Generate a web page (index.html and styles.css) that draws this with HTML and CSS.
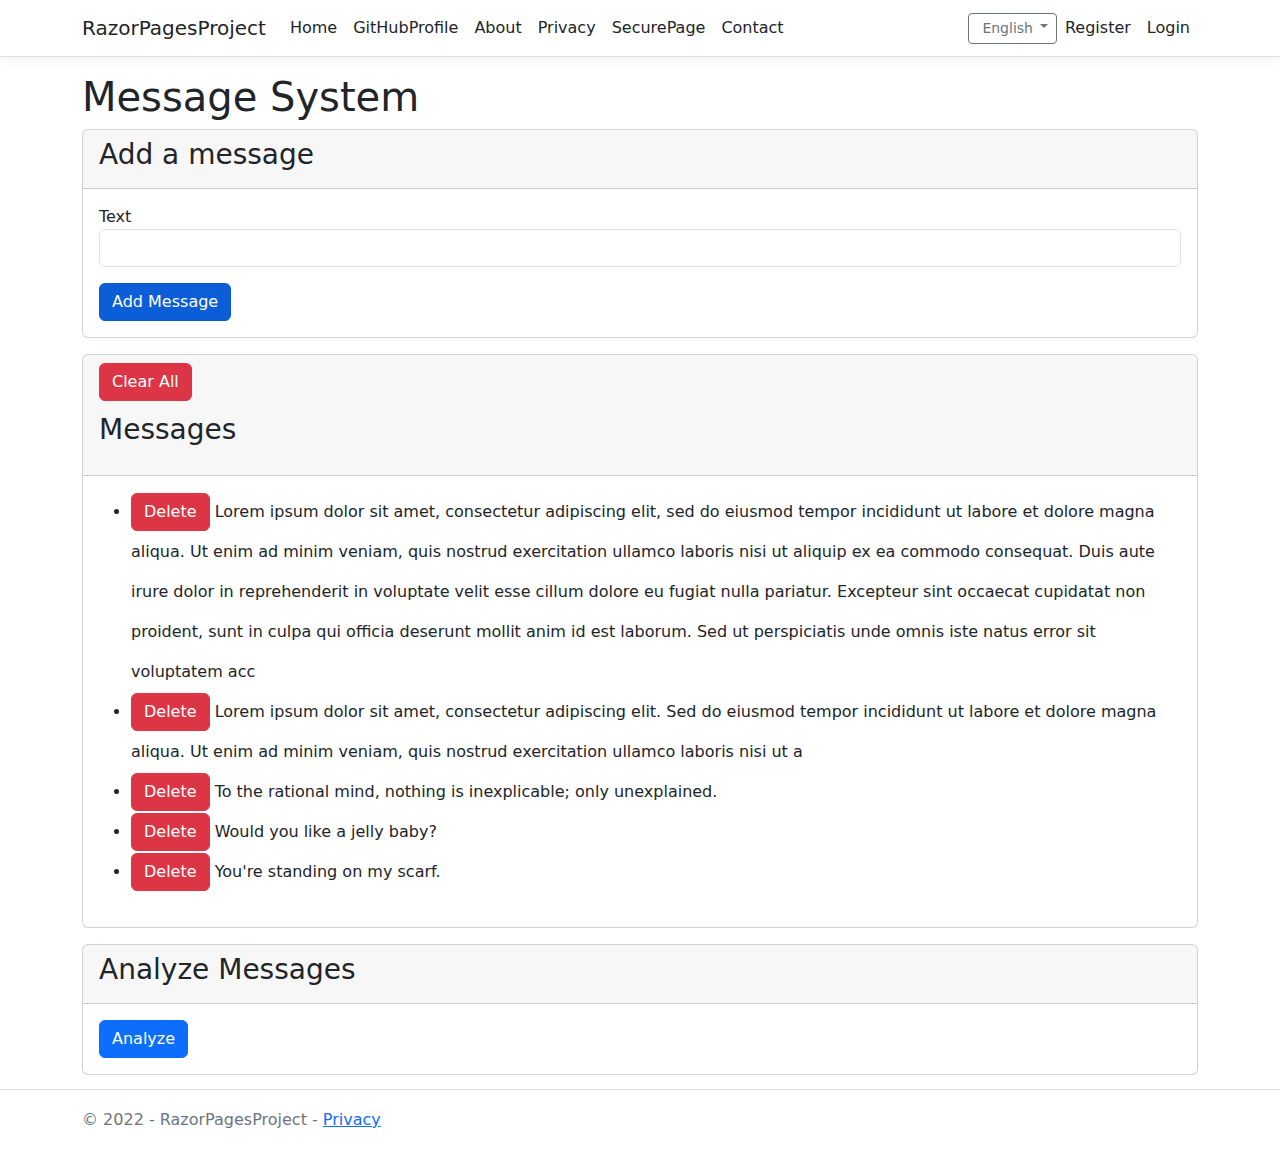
FILE: index.html
```html
<!DOCTYPE html>
<html lang="en">
<head>
<meta charset="utf-8">
<title>Message System - RazorPagesProject</title>
<link rel="stylesheet" href="styles.css">
</head>
<body>
<header class="navbar">
  <div class="container nav-inner">
    <a class="brand" href="#">RazorPagesProject</a>
    <ul class="nav-links">
      <li><a href="#">Home</a></li>
      <li><a href="#">GitHubProfile</a></li>
      <li><a href="#">About</a></li>
      <li><a href="#">Privacy</a></li>
      <li><a href="#">SecurePage</a></li>
      <li><a href="#">Contact</a></li>
    </ul>
    <div class="nav-right">
      <button class="lang-btn" type="button">English<span class="caret"></span></button>
      <a class="nav-link" href="#">Register</a>
      <a class="nav-link" href="#">Login</a>
    </div>
  </div>
</header>

<main class="container main">
  <h1 class="page-title">Message System</h1>

  <section class="card">
    <div class="card-header">
      <h3 class="card-title">Add a message</h3>
    </div>
    <div class="card-body">
      <form class="add-form">
        <label class="field-label" for="msg">Text</label>
        <input class="form-control" id="msg" type="text">
        <button class="btn btn-primary-dark add-btn" type="button">Add Message</button>
      </form>
    </div>
  </section>

  <section class="card">
    <div class="card-header">
      <button class="btn btn-danger" type="button">Clear All</button>
      <h3 class="card-title messages-title">Messages</h3>
    </div>
    <div class="card-body">
      <ul class="msg-list">
        <li><button class="btn btn-danger" type="button">Delete</button> Lorem ipsum dolor sit amet, consectetur adipiscing elit, sed do eiusmod tempor incididunt ut labore et dolore magna aliqua. Ut enim ad minim veniam, quis nostrud exercitation ullamco laboris nisi ut aliquip ex ea commodo consequat. Duis aute irure dolor in reprehenderit in voluptate velit esse cillum dolore eu fugiat nulla pariatur. Excepteur sint occaecat cupidatat non proident, sunt in culpa qui officia deserunt mollit anim id est laborum. Sed ut perspiciatis unde omnis iste natus error sit voluptatem acc</li>
        <li><button class="btn btn-danger" type="button">Delete</button> Lorem ipsum dolor sit amet, consectetur adipiscing elit. Sed do eiusmod tempor incididunt ut labore et dolore magna aliqua. Ut enim ad minim veniam, quis nostrud exercitation ullamco laboris nisi ut a</li>
        <li><button class="btn btn-danger" type="button">Delete</button> To the rational mind, nothing is inexplicable; only unexplained.</li>
        <li><button class="btn btn-danger" type="button">Delete</button> Would you like a jelly baby?</li>
        <li><button class="btn btn-danger" type="button">Delete</button> You're standing on my scarf.</li>
      </ul>
    </div>
  </section>

  <section class="card">
    <div class="card-header">
      <h3 class="card-title">Analyze Messages</h3>
    </div>
    <div class="card-body">
      <button class="btn btn-primary" type="button">Analyze</button>
    </div>
  </section>
</main>

<footer class="footer">
  <div class="container">&copy; 2022 - RazorPagesProject - <a href="#">Privacy</a></div>
</footer>
</body>
</html>
```

FILE: styles.css
```css
*, *::before, *::after { box-sizing: border-box; }

html, body { margin: 0; padding: 0; }

body {
  font-family: "DejaVu Sans", sans-serif;
  font-size: 16px;
  line-height: 1.5;
  color: #212529;
  background: #fff;
  min-height: 1150px;
  display: flex;
  flex-direction: column;
}

a { color: #0d6efd; }

.container {
  width: 1140px;
  margin: 0 auto;
  padding: 0 12px;
}

/* Navbar */
.navbar {
  background: #fff;
  border-bottom: 1px solid #dee2e6;
  box-shadow: 0 4px 12px rgba(0, 0, 0, 0.05);
  padding: 8px 0;
  margin-bottom: 16px;
}

.nav-inner {
  display: flex;
  align-items: center;
}

.brand {
  font-size: 20px;
  line-height: 30px;
  padding: 5px 0;
  margin-right: 16px;
  color: #212529;
  text-decoration: none;
}

.nav-links {
  display: flex;
  list-style: none;
  margin: 0;
  padding: 0;
  flex: 1;
}

.nav-links a, .nav-link {
  display: block;
  padding: 8px;
  color: #212529;
  text-decoration: none;
  line-height: 24px;
}

.nav-right {
  display: flex;
  align-items: center;
}

.lang-btn {
  font-family: inherit;
  font-size: 14px;
  line-height: 21px;
  color: #6c757d;
  background: #fff;
  border: 1px solid #6c757d;
  border-radius: 4px;
  padding: 4px 8px 4px 13px;
  display: inline-flex;
  align-items: center;
}

.caret {
  display: inline-block;
  margin-left: 7px;
  width: 0;
  height: 0;
  border-top: 4px solid #6c757d;
  border-left: 4px solid transparent;
  border-right: 4px solid transparent;
  position: relative;
  top: -2px;
}

/* Main */
.main {
  flex: 1;
  padding-bottom: 14px;
}

.page-title {
  font-size: 40px;
  font-weight: 500;
  line-height: 1.2;
  margin: 0 0 8px;
}

.card {
  border: 1px solid rgba(0, 0, 0, 0.175);
  border-radius: 6px;
  margin-bottom: 16px;
  background: #fff;
}

.card:last-child { margin-bottom: 0; }

.card-header {
  background: rgba(0, 0, 0, 0.03);
  border-bottom: 1px solid rgba(0, 0, 0, 0.175);
  padding: 8px 16px;
  border-radius: 5px 5px 0 0;
}

.card-title {
  font-size: 28px;
  font-weight: 500;
  line-height: 1.2;
  margin: 0 0 8px;
}

.messages-title {
  margin-top: 12px;
  margin-bottom: 21px;
}

.card-body {
  padding: 16px;
}

.add-form { display: flex; flex-direction: column; align-items: flex-start; }

.field-label {
  display: block;
  line-height: 24px;
}

.form-control {
  display: block;
  width: 100%;
  height: 38px;
  padding: 6px 12px;
  font-family: inherit;
  font-size: 16px;
  border: 1px solid #dee2e6;
  border-radius: 6px;
  background: #fff;
}

.add-btn { margin-top: 16px; }

.btn {
  display: inline-block;
  font-family: inherit;
  font-size: 16px;
  line-height: 24px;
  padding: 6px 12px;
  border: 1px solid transparent;
  border-radius: 6px;
  color: #fff;
  vertical-align: middle;
  cursor: pointer;
}

.btn-primary { background: #0d6efd; border-color: #0d6efd; }
.btn-primary-dark { background: #0b5ed7; border-color: #0a58ca; }
.btn-danger { background: #dc3545; border-color: #dc3545; }

.msg-list {
  margin: 0 0 19px;
  padding-left: 32px;
}

.msg-list li {
  line-height: 40px;
}

.msg-list .btn {
  vertical-align: top;
  margin-top: 1px;
  margin-bottom: 1px;
}

/* Footer */
.footer {
  border-top: 1px solid #dee2e6;
  line-height: 60px;
  color: #6c757d;
  white-space: nowrap;
}
```
